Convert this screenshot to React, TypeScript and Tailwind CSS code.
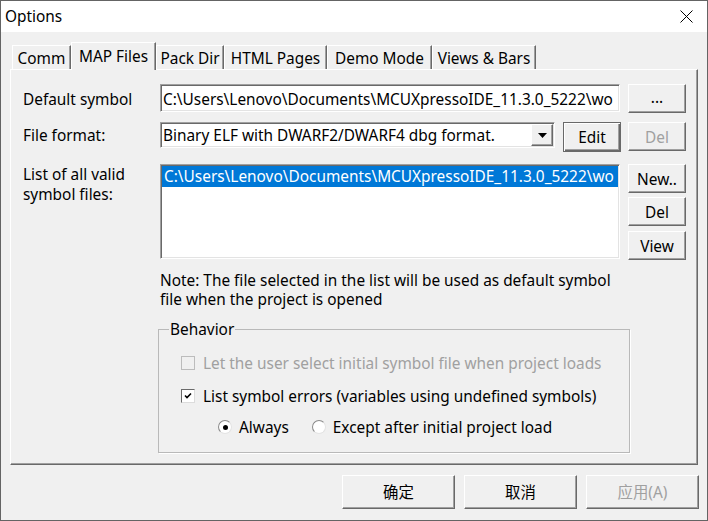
import type { ReactNode } from "react";

const raised =
  "border border-t-white border-l-white border-b-[#696969] border-r-[#696969] shadow-[inset_-1px_-1px_0_#a0a0a0] bg-[#f0f0f0]";
const sunken =
  "border border-t-[#a0a0a0] border-l-[#a0a0a0] border-b-white border-r-white shadow-[inset_1px_1px_0_#696969,inset_-1px_-1px_0_#e3e3e3] bg-white";

function Btn({
  children,
  className = "",
  disabled,
  isDefault,
}: {
  children: ReactNode;
  className?: string;
  disabled?: boolean;
  isDefault?: boolean;
}) {
  const frame = isDefault
    ? "border border-[#696969] shadow-[inset_1px_1px_0_#fff,inset_-1px_-1px_0_#696969,inset_-2px_-2px_0_#a0a0a0] bg-[#f0f0f0]"
    : raised;
  return (
    <div
      className={`flex items-center justify-center shrink-0 ${frame} ${
        disabled ? "text-[#a0a0a0]" : "text-black"
      } ${className}`}
    >
      {children}
    </div>
  );
}

function Tab({ label, w, active }: { label: string; w: string; active?: boolean }) {
  if (active) {
    return (
      <div
        className={`${w} relative z-10 -mb-px h-[28px] shrink-0 bg-[#f0f0f0] border-t border-l border-r border-t-white border-l-white border-r-[#696969] shadow-[inset_-1px_0_0_#a0a0a0] flex justify-center pt-[4px]`}
      >
        {label}
      </div>
    );
  }
  return (
    <div
      className={`${w} h-[24px] shrink-0 border-t border-l border-r border-t-white border-l-white border-r-[#696969] shadow-[inset_-1px_0_0_#a0a0a0] flex justify-center pt-[3px]`}
    >
      {label}
    </div>
  );
}

function CheckBox({ checked, disabled }: { checked?: boolean; disabled?: boolean }) {
  return (
    <div
      className={`w-[14px] h-[14px] shrink-0 flex items-center justify-center ${
        disabled
          ? "border border-[#bcbcbc] bg-[#f0f0f0]"
          : "border border-t-[#6a6a6a] border-l-[#6a6a6a] border-b-[#dcdcdc] border-r-[#dcdcdc] bg-white"
      }`}
    >
      {checked && (
        <svg width="10" height="10" viewBox="0 0 10 10">
          <path d="M2 4.5 L4 6.5 L8 2.5" fill="none" stroke="#000" strokeWidth="1.6" />
        </svg>
      )}
    </div>
  );
}

function Radio({ checked }: { checked?: boolean }) {
  return (
    <div className="w-[14px] h-[14px] shrink-0 rounded-full border border-t-[#8a8a8a] border-l-[#8a8a8a] border-b-[#e3e3e3] border-r-[#e3e3e3] bg-white flex items-center justify-center">
      {checked && <div className="w-[5px] h-[5px] rounded-full bg-black" />}
    </div>
  );
}

// only the visible part of the path
const PATH = "C:\\Users\\Lenovo\\Documents\\MCUXpressoIDE_11.3.0_5222\\wo";

export default function App() {
  return (
    <div className="w-[708px] h-[521px] bg-[#f0f0f0] border border-[#646464] flex flex-col text-[15.4px] leading-[20px] text-black font-['Noto_Sans','Noto_Sans_CJK_SC',sans-serif] overflow-hidden">
      {/* Title bar */}
      <div className="h-[31px] bg-white flex items-center justify-between pl-[4px] pr-[14px] shrink-0">
        <span>Options</span>
        <svg width="13" height="13" viewBox="0 0 13 13">
          <path d="M0.5 0.5 L12.5 12.5 M12.5 0.5 L0.5 12.5" stroke="#000" strokeWidth="1" />
        </svg>
      </div>

      {/* Tabs */}
      <div className="mt-[10px] h-[27px] flex items-end pl-[11px] shrink-0">
        <Tab label="Comm" w="w-[59px]" />
        <Tab label="MAP Files" w="w-[85px]" active />
        <Tab label="Pack Dir" w="w-[68px]" />
        <Tab label="HTML Pages" w="w-[103px]" />
        <Tab label="Demo Mode" w="w-[105px]" />
        <Tab label="Views & Bars" w="w-[104px]" />
      </div>

      {/* Panel */}
      <div className={`h-[396px] mx-[9px] shrink-0 pt-[14px] pl-[12px] ${raised}`}>
        {/* Default symbol */}
        <div className="flex items-start">
          <div className="w-[137px] pt-[6px]">Default symbol</div>
          <div className={`w-[460px] h-[28px] pl-[2px] pt-[5px] overflow-hidden whitespace-nowrap ${sunken}`}>
            {PATH}
          </div>
          <Btn className="ml-[8px] w-[58px] h-[29px] pb-[2px]">...</Btn>
        </div>

        {/* File format */}
        <div className="flex items-start mt-[9px]">
          <div className="w-[137px] pt-[4px]">File format:</div>
          <div className={`w-[395px] h-[26px] pl-[2px] flex items-center ${sunken}`}>
            <span className="flex-1 whitespace-nowrap overflow-hidden pt-[2px]">
              Binary ELF with DWARF2/DWARF4 dbg format.
            </span>
            <Btn className="w-[22px] h-[22px] mr-px">
              <svg width="9" height="5" viewBox="0 0 9 5">
                <path d="M0 0 H9 L4.5 5 Z" fill="#000" />
              </svg>
            </Btn>
          </div>
          <Btn isDefault className="ml-[8px] w-[58px] h-[30px] pt-[2px]">
            Edit
          </Btn>
          <Btn disabled className="ml-[7px] w-[58px] h-[29px] pt-[2px]">
            Del
          </Btn>
        </div>

        {/* List */}
        <div className="flex items-start mt-[12px]">
          <div className="w-[137px] pt-[1px]">
            List of all valid
            <br />
            symbol files:
          </div>
          <div className={`w-[460px] h-[95px] p-[1px] overflow-hidden ${sunken}`}>
            <div className="h-[21px] bg-[#0078d7] text-white pl-[2px] pt-[1px] whitespace-nowrap overflow-hidden">
              {PATH}
            </div>
          </div>
          <div className="ml-[8px] flex flex-col">
            <Btn className="w-[58px] h-[29px] pt-[2px]">New..</Btn>
            <Btn className="w-[58px] h-[29px] mt-[4px] pt-[2px]">Del</Btn>
            <Btn className="w-[58px] h-[29px] mt-[5px] pt-[2px]">View</Btn>
          </div>
        </div>

        {/* Note */}
        <div className="ml-[137px] mt-[11px] leading-[19px]">
          Note: The file selected in the list will be used as default symbol
          <br />
          file when the project is opened
        </div>

        {/* Behavior */}
        <fieldset className="ml-[135px] mt-[10px] w-[472px] h-[134px] border border-[#b9b9b9] shadow-[1px_1px_0_#fff] px-[10px]">
          <legend className="px-[1px] pt-[1px]">Behavior</legend>
          <div className="pl-[12px] pt-[13px] flex flex-col">
            <div className="flex items-center h-[20px] gap-[8px] text-[#a0a0a0]">
              <CheckBox disabled />
              <span className="pt-[2px]">Let the user select initial symbol file when project loads</span>
            </div>
            <div className="flex items-center h-[20px] gap-[8px] mt-[13px]">
              <CheckBox checked />
              <span className="pt-[2px]">List symbol errors (variables using undefined symbols)</span>
            </div>
            <div className="flex items-center h-[20px] mt-[11px] pl-[37px]">
              <Radio checked />
              <span className="ml-[7px] pt-[2px]">Always</span>
              <div className="ml-[23px]">
                <Radio />
              </div>
              <span className="ml-[7px] pt-[2px]">Except after initial project load</span>
            </div>
          </div>
        </fieldset>
      </div>

      {/* Bottom buttons */}
      <div className="mt-[10px] flex justify-end pr-[8px] gap-[9px]">
        <Btn className="w-[113px] h-[34px] pt-[2px]">确定</Btn>
        <Btn className="w-[113px] h-[34px] pt-[2px]">取消</Btn>
        <Btn disabled className="w-[113px] h-[34px] pt-[2px]">
          应用(A)
        </Btn>
      </div>
    </div>
  );
}
